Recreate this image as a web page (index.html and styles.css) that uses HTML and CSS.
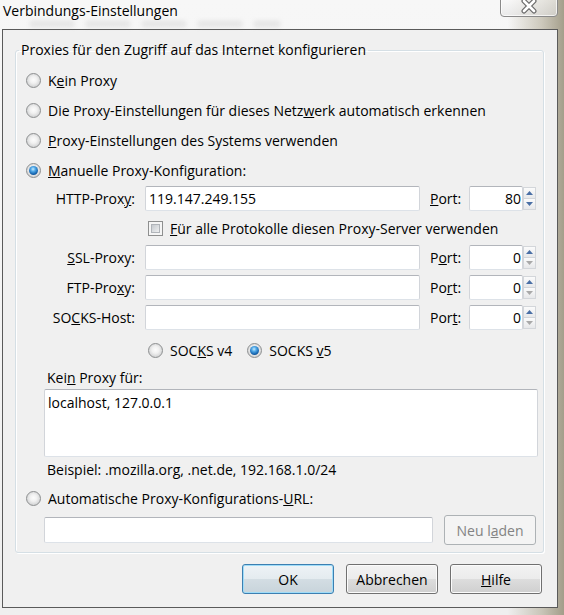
FILE: index.html
```html
<!DOCTYPE html>
<html lang="de">
<head>
<meta charset="utf-8">
<title>Verbindungs-Einstellungen</title>
<link rel="stylesheet" href="styles.css">
</head>
<body>
<div class="screen">
  <div class="backdrop-text" aria-hidden="true"></div>
  <header class="titlebar">
    <span class="title">Verbindungs-Einstellungen</span>
    <button class="close" type="button" aria-label="Schließen">
      <svg width="18" height="15" viewBox="0 0 18 15">
        <path d="M4 2 L14 12 M14 2 L4 12" stroke="#6a6a6a" stroke-width="5" stroke-linecap="round"/>
        <path d="M4 2 L14 12 M14 2 L4 12" stroke="#ffffff" stroke-width="2.6" stroke-linecap="round"/>
      </svg>
    </button>
  </header>

  <div class="dialog">
    <fieldset class="group">
      <legend>Proxies für den Zugriff auf das Internet konfigurieren</legend>
      <div class="group-body">
        <label class="opt"><span class="radio"></span><span>K<u>e</u>in Proxy</span></label>
        <label class="opt"><span class="radio"></span><span>Die Proxy-Einstellungen für dieses Netz<u>w</u>erk automatisch erkennen</span></label>
        <label class="opt"><span class="radio"></span><span><u>P</u>roxy-Einstellungen des Systems verwenden</span></label>
        <label class="opt"><span class="radio on"></span><span><u>M</u>anuelle Proxy-Konfiguration:</span></label>

        <div class="proxy-grid">
          <span class="lbl">HTTP-Prox<u>y</u>:</span>
          <input class="field" type="text" value="119.147.249.155">
          <span class="port-lbl"><u>P</u>ort:</span>
          <div class="spin">
            <input class="field num" type="text" value="80">
            <div class="arrows">
              <span class="arr"><svg width="7" height="4" viewBox="0 0 7 4"><path d="M0 4 L3.5 0 L7 4 Z" fill="#4a6fa5"/></svg></span>
              <span class="arr"><svg width="7" height="4" viewBox="0 0 7 4"><path d="M0 0 L3.5 4 L7 0 Z" fill="#4a6fa5"/></svg></span>
            </div>
          </div>

          <label class="all"><span class="check"></span><span><u>F</u>ür alle Protokolle diesen Proxy-Server verwenden</span></label>

          <span class="lbl"><u>S</u>SL-Proxy:</span>
          <input class="field" type="text" value="">
          <span class="port-lbl">P<u>o</u>rt:</span>
          <div class="spin">
            <input class="field num" type="text" value="0">
            <div class="arrows">
              <span class="arr"><svg width="7" height="4" viewBox="0 0 7 4"><path d="M0 4 L3.5 0 L7 4 Z" fill="#4a6fa5"/></svg></span>
              <span class="arr"><svg width="7" height="4" viewBox="0 0 7 4"><path d="M0 0 L3.5 4 L7 0 Z" fill="#a9a9a9"/></svg></span>
            </div>
          </div>

          <span class="lbl">FTP-Pro<u>x</u>y:</span>
          <input class="field" type="text" value="">
          <span class="port-lbl">Po<u>r</u>t:</span>
          <div class="spin">
            <input class="field num" type="text" value="0">
            <div class="arrows">
              <span class="arr"><svg width="7" height="4" viewBox="0 0 7 4"><path d="M0 4 L3.5 0 L7 4 Z" fill="#4a6fa5"/></svg></span>
              <span class="arr"><svg width="7" height="4" viewBox="0 0 7 4"><path d="M0 0 L3.5 4 L7 0 Z" fill="#a9a9a9"/></svg></span>
            </div>
          </div>

          <span class="lbl">SO<u>C</u>KS-Host:</span>
          <input class="field" type="text" value="">
          <span class="port-lbl">Por<u>t</u>:</span>
          <div class="spin">
            <input class="field num" type="text" value="0">
            <div class="arrows">
              <span class="arr"><svg width="7" height="4" viewBox="0 0 7 4"><path d="M0 4 L3.5 0 L7 4 Z" fill="#4a6fa5"/></svg></span>
              <span class="arr"><svg width="7" height="4" viewBox="0 0 7 4"><path d="M0 0 L3.5 4 L7 0 Z" fill="#a9a9a9"/></svg></span>
            </div>
          </div>
        </div>

        <div class="socks">
          <label class="ver"><span class="radio"></span><span>SOC<u>K</u>S v4</span></label>
          <label class="ver"><span class="radio on"></span><span>SOCKS <u>v</u>5</span></label>
        </div>

        <div class="np-label">Kei<u>n</u> Proxy für:</div>
        <textarea class="area">localhost, 127.0.0.1</textarea>
        <div class="hint">Beispiel: .mozilla.org, .net.de, 192.168.1.0/24</div>

        <label class="opt auto"><span class="radio"></span><span>Automatische Proxy-Konfigurations-<u>U</u>RL:</span></label>
        <div class="url-row">
          <input class="field url" type="text" value="">
          <button class="btn" type="button" disabled>Neu l<u>a</u>den</button>
        </div>
      </div>
    </fieldset>

    <div class="actions">
      <button class="btn default" type="button">OK</button>
      <button class="btn" type="button">Abbrechen</button>
      <button class="btn" type="button"><u>H</u>ilfe</button>
    </div>
  </div>
</div>
</body>
</html>
```

FILE: styles.css
```css
* { box-sizing: border-box; }

html, body {
  margin: 0;
  padding: 0;
}

body {
  width: 564px;
  height: 615px;
  overflow: hidden;
  font-family: "Open Sans", "Noto Sans", sans-serif;
  font-size: 14px;
  color: #000;
}

/* glass frame around the dialog */
.screen {
  position: relative;
  width: 564px;
  height: 615px;
  overflow: hidden;
  background:
    linear-gradient(90deg, rgba(255,255,255,0) 0%, rgba(255,255,255,0) 90%, rgba(170,163,140,0.55) 96%, rgba(150,143,120,0.85) 100%),
    linear-gradient(#f7f7f7, #f3f3f3 60%, #efefef);
}

/* blurred window behind the glass */
.backdrop-text {
  position: absolute;
  left: 30px;
  top: 21px;
  width: 250px;
  height: 6px;
  background: repeating-linear-gradient(90deg, rgba(140,140,140,0.18) 0 44px, rgba(140,140,140,0) 44px 56px);
  filter: blur(2.5px);
}

.titlebar {
  position: relative;
  height: 29px;
  display: flex;
  align-items: flex-start;
}

.title {
  font-size: 14px;
  line-height: 20px;
  margin: 1px 0 0 3px;
}

.close {
  margin: -5px 6px 0 auto;
  width: 58px;
  height: 22px;
  padding: 0;
  border: 1px solid #8a8a8a;
  border-radius: 0 0 4px 4px;
  background: linear-gradient(rgba(255,255,255,0.6), rgba(225,225,225,0.6));
  box-shadow: inset 0 0 0 1px rgba(255,255,255,0.7);
  display: flex;
  align-items: center;
  justify-content: center;
}

.dialog {
  margin-left: 2px;
  width: 556px;
  height: 579px;
  border: 1px solid #5a5a5a;
  background: #f0f0f0;
  display: flex;
  flex-direction: column;
}

/* group box */
.group {
  margin: 10px 13px 0 12px;
  padding: 0 0 7px 3px;
  border: 1px solid #d5dfe5;
  border-radius: 3px;
  box-shadow: inset 1px 1px 0 #fff, 1px 1px 0 #fff;
  min-width: 0;
}

.group legend {
  padding: 0 2px;
  line-height: 20px;
}

.group-body {
  padding: 5px 0 0 7px;
}

.opt {
  display: flex;
  align-items: center;
  height: 30px;
}

.opt.auto {
  margin-top: 3px;
}

.radio {
  position: relative;
  flex: none;
  width: 15px;
  height: 15px;
  margin-right: 7px;
  border-radius: 50%;
  border: 1px solid #8d8f90;
  background: radial-gradient(circle at 50% 45%, #fcfcfc 0, #f1f1f1 35%, #d0d1d2 78%, #e9e9e9 100%);
}

.radio.on::after {
  content: "";
  position: absolute;
  inset: 2px;
  border-radius: 50%;
  background: radial-gradient(circle at 45% 35%, #c8ecff 0, #4fa7e6 30%, #1463ad 65%, #0c3466 100%);
}

.check {
  position: relative;
  flex: none;
  width: 15px;
  height: 15px;
  margin-right: 7px;
  border: 1px solid #8e8f8f;
  background: #f5f5f5;
}

.check::after {
  content: "";
  position: absolute;
  inset: 2px;
  border: 1px solid #b0b4b9;
  background: linear-gradient(135deg, #c6cacf, #eeeff0);
}

/* manual proxy rows */
.proxy-grid {
  display: grid;
  grid-template-columns: 119px 275px 49px 67px;
  grid-template-rows: 25px 24px 25px 25px 25px;
  row-gap: 5px;
  margin-top: 1px;
  align-items: center;
}

.lbl {
  text-align: right;
  padding-right: 10px;
  white-space: nowrap;
}

.port-lbl {
  padding-left: 10px;
}

.field {
  height: 25px;
  margin: 0;
  padding: 0 3px;
  border: 1px solid;
  border-color: #b2b5bb #d2d5da #dde2e8 #d2d5da;
  border-radius: 2px;
  background: #fff;
  font: inherit;
  color: #000;
  outline: none;
}

.all {
  grid-column: 2 / span 3;
  display: flex;
  align-items: center;
  padding-left: 3px;
}

.spin {
  display: flex;
  height: 25px;
}

.spin .num {
  width: 54px;
  text-align: right;
  padding-right: 1px;
}

.arrows {
  width: 13px;
  display: flex;
  flex-direction: column;
  padding: 1px 0;
}

.arr {
  flex: 1;
  display: flex;
  align-items: center;
  justify-content: center;
  border: 1px solid #d3d6da;
  background: linear-gradient(#fbfbfb, #e7e8ea);
}

.arr + .arr {
  border-top: none;
}

.socks {
  display: flex;
  align-items: center;
  gap: 15px;
  height: 20px;
  margin-top: 10px;
  padding-left: 122px;
}

.ver {
  display: flex;
  align-items: center;
}

.np-label {
  margin-top: 8px;
  padding-left: 21px;
  line-height: 20px;
}

.area {
  display: block;
  margin: 1px 0 0 18px;
  width: 494px;
  height: 68px;
  padding: 3px 3px;
  border: 1px solid;
  border-color: #b2b5bb #d2d5da #dde2e8 #d2d5da;
  border-radius: 2px;
  background: #fff;
  font: inherit;
  line-height: 20px;
  color: #000;
  resize: none;
  outline: none;
}

.hint {
  margin-top: 3px;
  padding-left: 21px;
  line-height: 20px;
}

.url-row {
  display: flex;
  align-items: center;
  gap: 11px;
  height: 30px;
  margin-top: 2px;
  padding-left: 18px;
}

.url-row .url {
  width: 389px;
  height: 26px;
}

/* push buttons */
.btn {
  width: 92px;
  height: 30px;
  padding: 0;
  border: 1px solid #707070;
  border-radius: 3px;
  background: linear-gradient(#f2f2f2 0%, #ebebeb 50%, #dddddd 50%, #cfcfcf 100%);
  box-shadow: inset 0 0 0 1px #fbfbfb;
  font: inherit;
  color: #000;
}

.btn.default {
  border-color: #3c7fb1;
  background: linear-gradient(#eef3f6 0%, #e4ebef 50%, #d3dde3 50%, #c8d4db 100%);
  box-shadow: inset 0 0 0 1px #9fdcf8;
}

.btn:disabled {
  border-color: #adb2b5;
  background: #f4f4f4;
  box-shadow: none;
  color: #838383;
}

.actions {
  display: flex;
  justify-content: flex-end;
  gap: 12px;
  margin-top: 11px;
  padding-right: 15px;
}
```
